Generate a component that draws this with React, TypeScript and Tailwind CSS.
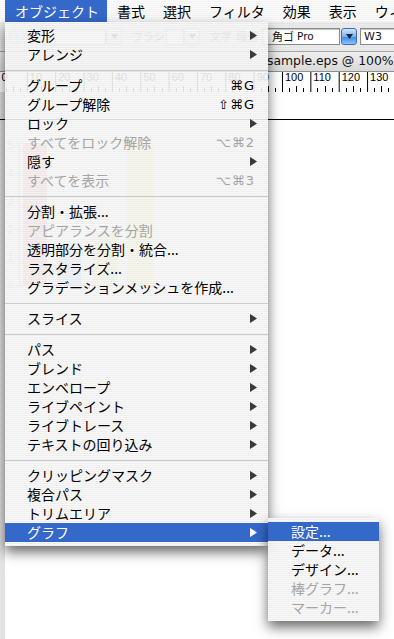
type Row = { label: string; key?: string; sub?: boolean; off?: boolean; hot?: boolean };
type Entry = Row | 'sep';

const objectMenu: Entry[] = [
  { label: '変形', sub: true },
  { label: 'アレンジ', sub: true },
  'sep',
  { label: 'グループ', key: '⌘G' },
  { label: 'グループ解除', key: '⇧⌘G' },
  { label: 'ロック', sub: true },
  { label: 'すべてをロック解除', key: '⌥⌘2', off: true },
  { label: '隠す', sub: true },
  { label: 'すべてを表示', key: '⌥⌘3', off: true },
  'sep',
  { label: '分割・拡張...' },
  { label: 'アピアランスを分割', off: true },
  { label: '透明部分を分割・統合...' },
  { label: 'ラスタライズ...' },
  { label: 'グラデーションメッシュを作成...' },
  'sep',
  { label: 'スライス', sub: true },
  'sep',
  { label: 'パス', sub: true },
  { label: 'ブレンド', sub: true },
  { label: 'エンベロープ', sub: true },
  { label: 'ライブペイント', sub: true },
  { label: 'ライブトレース', sub: true },
  { label: 'テキストの回り込み', sub: true },
  'sep',
  { label: 'クリッピングマスク', sub: true },
  { label: '複合パス', sub: true },
  { label: 'トリムエリア', sub: true },
  { label: 'グラフ', sub: true, hot: true },
];

const graphMenu: Row[] = [
  { label: '設定...', hot: true },
  { label: 'データ...' },
  { label: 'デザイン...' },
  { label: '棒グラフ...', off: true },
  { label: 'マーカー...', off: true },
];

const titles = ['オブジェクト', '書式', '選択', 'フィルタ', '効果', '表示', 'ウィンドウ'];

// translucent pinstripe like the aqua menus
const menuBg =
  'bg-[image:repeating-linear-gradient(180deg,rgba(248,248,248,0.91)_0px,rgba(248,248,248,0.91)_1px,rgba(237,237,237,0.91)_1px,rgba(237,237,237,0.91)_2px)]';

function Arrow({ white }: { white?: boolean }) {
  return (
    <svg width="7" height="9" viewBox="0 0 7 9" className="shrink-0">
      <polygon points="0,0 7,4.5 0,9" fill={white ? '#ffffff' : '#3a3a3a'} />
    </svg>
  );
}

function MenuRow({ row, sub }: { row: Row; sub?: boolean }) {
  const tone = row.hot ? 'bg-[#3468c9] text-white' : row.off ? 'text-[#a4a4a4]' : 'text-black';
  return (
    <div className={`flex h-[19px] items-center pr-[11px] ${sub ? 'pl-[23px]' : 'pl-[22px]'} ${tone}`}>
      <span className="flex-1 whitespace-nowrap">{row.label}</span>
      {row.key && (
        <span className="mr-[2px] font-['DejaVu_Sans',sans-serif] text-[13px] tracking-[1px]">{row.key}</span>
      )}
      {row.sub && <Arrow white={row.hot} />}
    </div>
  );
}

function MenuBar() {
  return (
    <div className="flex h-[22px] shrink-0 items-center pl-[5px] text-[14px] leading-[22px] bg-[image:repeating-linear-gradient(180deg,#fbfbfb_0px,#fbfbfb_1px,#f3f3f3_1px,#f3f3f3_2px)]">
      {titles.map((t, i) => (
        <div
          key={t}
          className={`whitespace-nowrap pl-[10px] pr-[8px] ${i === 0 ? 'bg-[#3468c9] text-white' : 'text-black'}`}
        >
          {t}
        </div>
      ))}
    </div>
  );
}

function DropBtn({ blue }: { blue?: boolean }) {
  return (
    <div
      className={`flex h-[17px] w-[16px] shrink-0 items-center justify-center rounded-[3px] border ${
        blue
          ? 'border-[#3f6fb0] bg-[linear-gradient(180deg,#cfe3fb_0%,#7fb2ee_50%,#3f88e2_52%,#8fc3f7_100%)]'
          : 'border-[#a9a9a9] bg-[linear-gradient(180deg,#fdfdfd,#d8d8d8)]'
      }`}
    >
      <svg width="7" height="5" viewBox="0 0 7 5">
        <polygon points="0,0 7,0 3.5,5" fill="#1a2540" />
      </svg>
    </div>
  );
}

function Toolbar() {
  return (
    <div className="flex h-[30px] shrink-0 items-center border-b border-[#a2a2a2] pl-[9px] font-['Noto_Sans_CJK_JP',sans-serif] text-[11px] bg-[image:repeating-linear-gradient(180deg,#ececec_0px,#ececec_1px,#e4e4e4_1px,#e4e4e4_2px)]">
      <div className="flex h-[15px] w-[15px] shrink-0 items-center justify-center rounded-full border border-[#9c9c9c] text-[10px] leading-none text-[#808080]">
        ?
      </div>
      <div className="ml-[6px] h-[16px] w-[76px] shrink-0 border border-[#9a9a9a] bg-white" />
      <DropBtn />
      <span className="ml-[10px] w-[34px] shrink-0 text-[#555]">ブラシ</span>
      <div className="h-[16px] w-[18px] shrink-0 border border-[#9a9a9a] bg-white" />
      <DropBtn />
      <span className="ml-[10px] w-[24px] shrink-0 text-[#555]">文字</span>
      <span className="ml-[2px] w-[26px] shrink-0 text-[#555]">段落</span>
      <div className="flex h-[17px] w-[78px] shrink-0 items-center border border-[#8c8c8c] bg-white pl-[9px] leading-none text-[#111] shadow-[inset_0_1px_1px_rgba(0,0,0,0.25)]">
        角ゴ <span className="ml-[3px] font-['DejaVu_Sans',sans-serif] text-[10.5px]">Pro</span>
      </div>
      <div className="ml-[1px]">
        <DropBtn blue />
      </div>
      <div className="ml-[3px] flex h-[17px] w-[60px] shrink-0 items-center border border-[#8c8c8c] bg-white pl-[3px] font-['DejaVu_Sans',sans-serif] text-[11px] leading-none text-[#111] shadow-[inset_0_1px_1px_rgba(0,0,0,0.25)]">
        W3
      </div>
    </div>
  );
}

function TitleBar() {
  return (
    <div className="flex h-[20px] shrink-0 items-center border-b border-[#8e8e8e] bg-[linear-gradient(180deg,#efefef,#d9d9d9)] pl-[267px] font-['DejaVu_Sans',sans-serif] text-[12.4px] leading-none whitespace-nowrap text-[#111]">
      sample.eps @ 100%
    </div>
  );
}

function Ruler() {
  const x = (v: number) => -1.5 + v * 2.835;
  const majors: number[] = [];
  for (let v = 0; v <= 130; v += 10) majors.push(v);
  const minors: number[] = [];
  for (let v = 0; v <= 140; v += 2.5) if (v % 10 !== 0) minors.push(v);
  return (
    <svg width="394" height="20" className="block shrink-0 bg-white">
      {majors.map((v) => (
        <g key={v}>
          <line x1={x(v) + 0.5} y1="0" x2={x(v) + 0.5} y2="20" stroke="#000" strokeWidth="1" />
          <text x={x(v) + 3} y="9" fontSize="11" fontFamily="Liberation Sans, sans-serif" fill="#000">
            {v}
          </text>
        </g>
      ))}
      {minors.map((v) => (
        <line
          key={v}
          x1={Math.round(x(v)) + 0.5}
          y1={v % 5 === 0 ? 14 : 16}
          x2={Math.round(x(v)) + 0.5}
          y2="20"
          stroke="#000"
          strokeWidth="1"
        />
      ))}
    </svg>
  );
}

function Chart() {
  // the graph object on the artboard, seen through the menu
  return (
    <svg width="200" height="180" className="block">
      <line x1="19.5" y1="22" x2="19.5" y2="165" stroke="#8aa0d8" />
      <line x1="19.5" y1="165.5" x2="180" y2="165.5" stroke="#8aa0d8" />
      {[0, 1, 2, 3, 4, 5].map((n) => (
        <g key={n}>
          <line x1="15" y1={165.5 - n * 28} x2="20" y2={165.5 - n * 28} stroke="#8aa0d8" />
          <text x="8" y={169 - n * 28} fontSize="10" fill="#8aa0d8" fontFamily="Liberation Sans, sans-serif">
            {n}
          </text>
        </g>
      ))}
      <rect x="23" y="23" width="24" height="142" fill="#f29a9a" />
      <rect x="57" y="127" width="24" height="38" fill="#9cc0f2" />
      <rect x="93" y="113" width="25" height="52" fill="#dcec8c" />
      <rect x="127" y="23" width="26" height="142" fill="#f2ee82" />
    </svg>
  );
}

function Canvas() {
  return (
    <div className="flex flex-1 flex-col bg-[linear-gradient(90deg,#e2e2e2_5px,#ffffff_5px)]">
      <div className="h-[27px] shrink-0" />
      <div className="h-px shrink-0 bg-black" />
      <Chart />
    </div>
  );
}

export default function App() {
  return (
    <div className="relative flex h-[639px] w-[394px] flex-col overflow-hidden bg-white font-['Noto_Sans_CJK_JP',sans-serif] select-none">
      <MenuBar />
      <Toolbar />
      <TitleBar />
      <Ruler />
      <Canvas />

      <div
        className={`absolute left-[5px] top-[22px] w-[263px] py-[4px] text-[14px] leading-[19px] shadow-[0_6px_12px_rgba(0,0,0,0.6)] ${menuBg}`}
      >
        {objectMenu.map((e, i) =>
          e === 'sep' ? (
            <div key={i} className="flex h-[12px] items-center">
              <div className="h-px w-full bg-[#cbcbcb]" />
            </div>
          ) : (
            <MenuRow key={i} row={e} />
          )
        )}
      </div>

      <div
        className={`absolute left-[268px] top-[518px] w-[111px] py-[4px] text-[14px] leading-[19px] shadow-[0_6px_12px_rgba(0,0,0,0.6)] ${menuBg}`}
      >
        {graphMenu.map((r) => (
          <MenuRow key={r.label} row={r} sub />
        ))}
      </div>
    </div>
  );
}
